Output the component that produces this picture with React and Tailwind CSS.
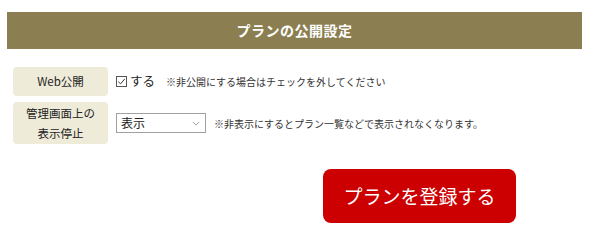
export default function App() {
  const font = { fontFamily: '"Noto Sans CJK JP", "Noto Sans", sans-serif' };

  return (
    <div className="w-[600px] h-[240px] bg-white text-[#222]" style={font}>
      <div className="pt-[12px] pl-[7px] w-[582px]">
        {/* 見出し */}
        <div className="h-[37px] bg-[#8b7e50] flex items-center justify-center">
          <h2 className="text-white text-[14px] font-bold tracking-[0.5px]">プランの公開設定</h2>
        </div>

        <div className="mt-[18px] pl-[6px] flex flex-col gap-[6px]">
          <div className="flex items-center">
            <div className="w-[95px] h-[29px] rounded-[4px] bg-[#efebd9] flex items-center justify-center text-[11.5px]">
              Web公開
            </div>
            <label className="ml-[8px] flex items-center text-[12.5px]">
              <span className="w-[11px] h-[11px] border border-[#555] bg-white flex items-center justify-center">
                <svg viewBox="0 0 10 10" className="w-[9px] h-[9px]">
                  <path d="M1.5 5.2 L4 7.6 L8.6 2.2" fill="none" stroke="#333" strokeWidth="1.1" />
                </svg>
              </span>
              <span className="ml-[3px]">する</span>
            </label>
            <span className="ml-[11px] text-[10px] text-[#333]">※非公開にする場合はチェックを外してください</span>
          </div>

          <div className="flex items-center">
            <div className="w-[95px] h-[42px] rounded-[4px] bg-[#efebd9] flex items-center justify-center text-center text-[11.5px] leading-[20px]">
              管理画面上の<br />表示停止
            </div>
            <div className="ml-[8px] w-[90px] h-[20px] border border-[#a0a0a0] bg-white flex items-center justify-between pl-[4px] pr-[5px] text-[12px]">
              <span>表示</span>
              <svg viewBox="0 0 10 6" className="w-[8px] h-[5px]">
                <path d="M1 1 L5 5 L9 1" fill="none" stroke="#888" strokeWidth="0.9" />
              </svg>
            </div>
            <span className="ml-[8px] text-[10px] text-[#333]">※非表示にするとプラン一覧などで表示されなくなります。</span>
          </div>
        </div>

        <div className="mt-[25px] pl-[316px]">
          <button className="w-[193px] h-[54px] rounded-[8px] bg-[#cc0000] text-white text-[19px]">
            プランを登録する
          </button>
        </div>
      </div>
    </div>
  );
}
